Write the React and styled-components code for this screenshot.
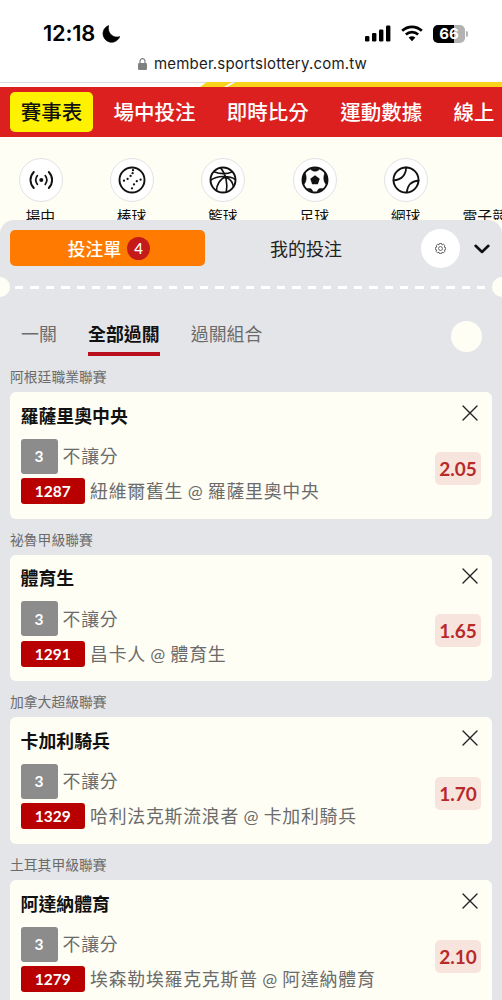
import React, { useState } from 'react'
import styled, { createGlobalStyle } from 'styled-components'

const sports = [
  { name: '場中', icon: 'live' },
  { name: '棒球', icon: 'baseball' },
  { name: '籃球', icon: 'basketball' },
  { name: '足球', icon: 'soccer' },
  { name: '網球', icon: 'tennis' },
  { name: '電子競', icon: '' },
]

const bets = [
  { id: '1287', league: '阿根廷職業聯賽', pick: '羅薩里奧中央', match: '紐維爾舊生 @ 羅薩里奧中央', odds: '2.05' },
  { id: '1291', league: '祕魯甲級聯賽', pick: '體育生', match: '昌卡人 @ 體育生', odds: '1.65' },
  { id: '1329', league: '加拿大超級聯賽', pick: '卡加利騎兵', match: '哈利法克斯流浪者 @ 卡加利騎兵', odds: '1.70' },
  { id: '1279', league: '土耳其甲級聯賽', pick: '阿達納體育', match: '埃森勒埃羅克克斯普 @ 阿達納體育', odds: '2.10' },
]

function SportIcon({ type }) {
  return (
    <svg width="28" height="28" viewBox="0 0 28 28" fill="none" stroke="#111" strokeWidth="1.7" strokeLinecap="round">
      {type === 'live' && (
        <>
          <circle cx="14.3" cy="14" r="2" fill="#111" stroke="none" />
          <path d="M10.4 9.6c-2 2.6-2 6.2 0 8.8M18.2 9.6c2 2.6 2 6.2 0 8.8" />
          <path d="M6.8 6c-4.4 4.6-4.4 11.4 0 16M21.800 6c4.400 4.600 4.400 11.400 0 16" strokeWidth="1.9" />
        </>
      )}
      {type !== 'live' && <circle cx="14" cy="14" r="12.5" strokeWidth="1.9" />}
      {type === 'baseball' && (
        <path d="M15 4.2v.01M14.6 7.2v.01M12.6 9.9v.01M9.6 12.9v.01M6 14.7v.01M22.6 13.7v.01M18.8 15.2v.01M16 18.4v.01M14 22.3v.01" strokeWidth="2.3" />
      )}
      {type === 'basketball' && (
        <path d="M11.5 1.8C17 8 19 18 17.2 26M1.8 14C8 9.8 20 9 26.3 13.5M4.8 5.7C11 8 18 8.2 23.5 5.7M7.5 24.8C7.5 19 11 12.5 17.5 10.8M17.8 11.8c3.5 1.5 6 5 6.7 9" strokeWidth="1.6" />
      )}
      {type === 'soccer' && (
        <>
          <path d="M14 9.3l4.7 3.4-1.8 5.5h-5.8l-1.8-5.5z" fill="#111" stroke="none" />
          <path d="M9 2.3h10c-1 1.9-2.9 2.9-5 2.9s-4-1-5-2.9zM24 6.5l2.200 4.500.3 5-1.500 2.200c-2.300-2.300-3-7-1-11.700zM4 6.500L1.800 11l-.3 5L3 18.200c2.300-2.300 3-7 1-11.700zM22 23l-5.700 3.300c-.1-3 2.200-4.600 5.700-3.300zM6 23l5.700 3.300c.1-3-2.200-4.600-5.700-3.300z" fill="#111" strokeWidth=".6" />
        </>
      )}
      {type === 'tennis' && (
        <path d="M14.2 1.4C13.8 9 9.5 13.8 1.6 14.4M26.6 14.6C19.5 15 15.5 19 14.8 26.5" />
      )}
    </svg>
  )
}

function BetItem({ bet, onRemove }) {
  return (
    <>
      <League>{bet.league}</League>
      <Card>
        <Details>
          <Pick>{bet.pick}</Pick>
          <Line $height={35}>
            <Tag>3</Tag>
            <Info>不讓分</Info>
          </Line>
          <Line $height={26}>
            <Tag $code>{bet.id}</Tag>
            <Info>{bet.match}</Info>
          </Line>
        </Details>
        <Side>
          <Remove type="button" onClick={onRemove}>
            <svg width="16" height="16" viewBox="0 0 16 16" stroke="#222" strokeWidth="1.4" strokeLinecap="round">
              <path d="M1 1l14 14M15 1L1 15" />
            </svg>
          </Remove>
          <Odds>{bet.odds}</Odds>
        </Side>
      </Card>
    </>
  )
}

function App() {
  const [list, setList] = useState(bets)
  const [tab, setTab] = useState('全部過關')

  return (
    <Screen>
      <GlobalStyle />
      <StatusBar>
        <Clock>
          12:18
          <svg width="18" height="18" viewBox="0 0 18 18">
            <path d="M6.6.6A8.6 8.6 0 1 0 17.7 11.600C11 14 4.800 7.500 6.600.6z" fill="#000" stroke="#000" strokeWidth=".7" strokeLinejoin="round" />
          </svg>
        </Clock>
        <Signals>
          <svg width="26" height="17" viewBox="0 0 26 17">
            <rect x="0" y="11" width="4.4" height="5.5" rx="1.2" />
            <rect x="7" y="8" width="4.4" height="8.5" rx="1.2" />
            <rect x="14" y="4.5" width="4.4" height="12" rx="1.2" />
            <rect x="21" y=".5" width="4.4" height="16" rx="1.2" />
          </svg>
          <svg width="22" height="17" viewBox="0 0 22 17" fill="none" stroke="#000" strokeWidth="2.7">
            <path d="M1.2 5.8c5.6-5.3 14-5.3 19.6 0" />
            <path d="M4.9 9.6c3.5-3.3 8.7-3.3 12.2 0" />
            <path d="M7.6 12.6c2-1.7 4.8-1.7 6.8 0L11 16.2z" fill="#000" stroke="none" />
          </svg>
          <Battery>66</Battery>
        </Signals>
      </StatusBar>
      <Address>
        <svg width="9" height="12" viewBox="0 0 9 12">
          <rect x="0" y="5" width="9" height="7" rx="1.3" fill="#808080" />
          <path d="M2 5.5V3.2a2.5 2.5 0 0 1 5 0v2.3" fill="none" stroke="#808080" strokeWidth="1.2" />
        </svg>
        member.sportslottery.com.tw
      </Address>
      <Ribbon>
        <svg width="502" height="5" viewBox="0 0 502 5">
          <path d="M207 0h25l-8 5h-24zM236 0h266v5H227z" fill="#f9d31c" />
        </svg>
      </Ribbon>
      <Nav>
        <NavItem $active>賽事表</NavItem>
        <NavItem>場中投注</NavItem>
        <NavItem>即時比分</NavItem>
        <NavItem>運動數據</NavItem>
        <NavItem>線上</NavItem>
      </Nav>
      <Sports>
        {sports.map(s => (
          <Sport key={s.name}>
            {s.icon ? <Round><SportIcon type={s.icon} /></Round> : <Blank />}
            <SportName $last={!s.icon}>{s.name}</SportName>
          </Sport>
        ))}
      </Sports>
      <Sheet>
        <SheetHead>
          <SlipButton type="button">投注單 <Count>{bets.length}</Count></SlipButton>
          <MyBets type="button">我的投注</MyBets>
          <Settings type="button">
            <svg width="11" height="11" viewBox="0 0 24 24" fill="none" stroke="#444" strokeWidth="1.7" strokeLinejoin="round">
              <path d="M9.5 1h5l.8 3.3 2.9-1.7 3.5 3.5-1.7 2.9 3.2.8v4.6l-3.2.8 1.7 2.9-3.5 3.5-2.9-1.7-.8 3.1h-5l-.8-3.1-2.9 1.7-3.500-3.500L4 15.200l-3.200-.8V9.800L4 9 2.300 6.100l3.500-3.500 2.900 1.700z" />
              <circle cx="12" cy="12" r="4.3" />
            </svg>
          </Settings>
          <svg width="16" height="12" viewBox="0 0 16 12" fill="none" stroke="#111" strokeWidth="2.6" strokeLinecap="round" strokeLinejoin="round">
            <path d="M1.6 3.8L8 10l6.400-6.200" />
          </svg>
        </SheetHead>
        <Tear>
          <Notch />
          <Dashes />
          <Notch $right />
        </Tear>
        <Tabs>
          {['一關', '全部過關', '過關組合'].map(t => (
            <Tab key={t} type="button" $active={t === tab} onClick={() => setTab(t)}>{t}</Tab>
          ))}
          <Dot />
        </Tabs>
        {list.map(bet => (
          <BetItem key={bet.id} bet={bet} onRemove={() => setList(list.filter(b => b.id !== bet.id))} />
        ))}
      </Sheet>
    </Screen>
  )
}

export default App

const GlobalStyle = createGlobalStyle`
  * {
    box-sizing: border-box;
  }
  body {
    margin: 0;
    background: #fffef5;
    overflow: hidden;
  }
  button {
    border: none;
    background: none;
    padding: 0;
    font-family: inherit;
    cursor: pointer;
  }
  svg {
    display: block;
    flex: none;
  }
`
const Screen = styled.div`
  width: 502px;
  height: 1000px;
  overflow: hidden;
  display: flex;
  flex-direction: column;
  background: #fffef5;
  font-family: Lato, "Noto Sans CJK TC", sans-serif;
  > * {
    flex: none;
  }
`
const StatusBar = styled.div`
  height: 52px;
  padding: 15px 35px 0 43px;
  display: flex;
  justify-content: space-between;
  align-items: center;
  background: #fff;
`
const Clock = styled.div`
  display: flex;
  align-items: center;
  gap: 7.5px;
  font: 600 21.8px/37px Inter, sans-serif;
  letter-spacing: -0.2px;
`
const Signals = styled.div`
  display: flex;
  align-items: center;
  gap: 10px;
`
const Battery = styled.div`
  width: 32px;
  height: 18px;
  border-radius: 5px;
  background: linear-gradient(90deg, #000 66%, #b3b3b3 66%);
  color: #fff;
  font: 700 15px/18px Inter, sans-serif;
  text-align: center;
  margin-right: 2px;
  position: relative;
  &::after {
    content: "";
    position: absolute;
    right: -3px;
    top: 6px;
    width: 2px;
    height: 6px;
    border-radius: 0 2px 2px 0;
    background: #b3b3b3;
  }
`
const Address = styled.div`
  height: 30px;
  padding: 0 0 7px 3px;
  display: flex;
  align-items: center;
  justify-content: center;
  gap: 7px;
  background: #fff;
  color: #1c1c1c;
  font: 400 15px/22px Inter, sans-serif;
  letter-spacing: 0.2px;
`
const Ribbon = styled.div`
  height: 5px;
  background: #fff;
  border-top: 1px solid #d9d9e0;
  svg {
    margin-top: -1px;
  }
`
const Nav = styled.div`
  height: 50px;
  padding: 5px 0 5px 10px;
  display: flex;
  gap: 9.7px;
  background: #dc1f1f;
`
const NavItem = styled.div`
  flex: none;
  height: 40px;
  padding: 0 10.8px;
  border-radius: 5px;
  background: ${p => p.$active ? '#fff200' : 'transparent'};
  color: ${p => p.$active ? '#111' : '#fff'};
  font-size: 20.5px;
  font-weight: 500;
  line-height: 40px;
  white-space: nowrap;
`
const Sports = styled.div`
  height: 83px;
  padding-top: 21px;
  display: flex;
  overflow: hidden;
  margin-left: -4.9px;
`
const Sport = styled.div`
  flex: none;
  width: 91.3px;
  display: flex;
  flex-direction: column;
  align-items: center;
  gap: 3px;
`
const SportName = styled.div`
  flex: none;
  padding-right: ${p => p.$last ? '25px' : '1px'};
  color: #111;
  font-size: 14.8px;
  line-height: 22px;
  white-space: nowrap;
`
const Round = styled.div`
  flex: none;
  width: 44px;
  height: 44px;
  border: 1px solid #e2e2e6;
  border-radius: 50%;
  background: #fff;
  display: flex;
  align-items: center;
  justify-content: center;
`
const Blank = styled.div`
  flex: none;
  height: 44px;
`
const Sheet = styled.div`
  height: 780px;
  overflow: hidden;
  border-radius: 14px 14px 0 0;
  background: #e4e5e8;
`
const SheetHead = styled.div`
  height: 56px;
  padding: 0 12px 0 10px;
  display: flex;
  align-items: center;
`
const SlipButton = styled.button`
  width: 195px;
  height: 36px;
  border-radius: 5px;
  background: #ff7a00;
  color: #fff;
  font-size: 17.8px;
  font-weight: 500;
  display: flex;
  align-items: center;
  justify-content: center;
  gap: 6px;
  padding-left: 3px;
`
const Count = styled.span`
  width: 23px;
  height: 23px;
  border-radius: 50%;
  background: #c41a1a;
  font-size: 15px;
  line-height: 23px;
`
const MyBets = styled.button`
  width: 202px;
  color: #222;
  font-size: 18px;
`
const Settings = styled.button`
  width: 39px;
  height: 39px;
  margin: 0 14px 0 13.5px;
  border-radius: 50%;
  background: #fff;
  display: flex;
  align-items: center;
  justify-content: center;
`
const Tear = styled.div`
  height: 22px;
  display: flex;
  align-items: center;
`
const Notch = styled.div`
  width: 10px;
  height: 20px;
  background: #fffef5;
  border-radius: ${p => p.$right ? '10px 0 0 10px' : '0 10px 10px 0'};
`
const Dashes = styled.div`
  flex: 1;
  height: 3px;
  margin: 0 5px 0 5px;
  background: repeating-linear-gradient(90deg, #fff 0 8.5px, transparent 8.5px 15.4px);
`
const Tabs = styled.div`
  height: 58px;
  padding: 19px 20px 0 21px;
  display: flex;
  align-items: flex-start;
  gap: 31.2px;
`
const Tab = styled.button`
  height: 39px;
  border-bottom: 4px solid ${p => p.$active ? '#b8101c' : 'transparent'};
  color: ${p => p.$active ? '#111' : '#6b6b6b'};
  font-size: 17.9px;
  font-weight: ${p => p.$active ? 700 : 400};
  line-height: 35px;
`
const Dot = styled.div`
  width: 31px;
  height: 31px;
  margin: 4px 0 0 auto;
  border-radius: 50%;
  background: #fffef5;
`
const League = styled.div`
  height: 36px;
  padding: 10px 10px 0;
  color: #6b6b6b;
  font-size: 13.8px;
  line-height: 22px;
`
const Card = styled.div`
  height: 126.7px;
  margin: 0 10.5px 0 10px;
  padding: 0 10.5px;
  border-radius: 6px;
  background: #fffef5;
  display: flex;
  justify-content: space-between;
`
const Details = styled.div`
  padding-top: 9.5px;
`
const Pick = styled.div`
  height: 37px;
  color: #111;
  font-size: 17.9px;
  font-weight: 700;
  line-height: 28px;
`
const Line = styled.div`
  height: ${p => p.$height}px;
  margin-bottom: 4.5px;
  display: flex;
  align-items: center;
  gap: 5px;
`
const Tag = styled.div`
  width: ${p => p.$code ? 64.5 : 37}px;
  height: 100%;
  border-radius: 3px;
  background: ${p => p.$code ? '#b80000' : '#8c8c8c'};
  color: #fff;
  font-size: 15.5px;
  font-weight: 700;
  display: flex;
  align-items: center;
  justify-content: center;
`
const Info = styled.div`
  color: #6b6b6b;
  font-size: 17.9px;
  letter-spacing: 0.75px;
  word-spacing: -0.9px;
  line-height: 26px;
  white-space: nowrap;
`
const Side = styled.div`
  padding-top: 13px;
  display: flex;
  flex-direction: column;
  align-items: flex-end;
  gap: 30.5px;
`
const Remove = styled.button`
  width: 16px;
  height: 16px;
  margin-right: 3px;
`
const Odds = styled.div`
  width: 46px;
  height: 33px;
  border-radius: 5px;
  background: #f7e4dd;
  color: #b82a2a;
  font-size: 19px;
  font-weight: 700;
  line-height: 33px;
  text-align: center;
`
